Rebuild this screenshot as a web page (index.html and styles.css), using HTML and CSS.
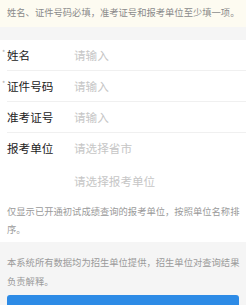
FILE: index.html
```html
<!DOCTYPE html>
<html lang="zh">
<head>
<meta charset="utf-8">
<link rel="stylesheet" href="styles.css">
</head>
<body>
<div class="tip">姓名、证件号码必填，准考证号和报考单位至少填一项。</div>
<div class="form">
  <div class="row line"><span class="label req">姓名</span><span class="ph">请输入</span></div>
  <div class="row line"><span class="label req">证件号码</span><span class="ph">请输入</span></div>
  <div class="row line"><span class="label">准考证号</span><span class="ph">请输入</span></div>
  <div class="row"><span class="label">报考单位</span><span class="ph">请选择省市</span></div>
  <div class="row sub"><span class="label"></span><span class="ph">请选择报考单位</span></div>
  <p class="note">仅显示已开通初试成绩查询的报考单位，按照单位名称排序。</p>
</div>
<div class="foot">
  <p class="note">本系统所有数据均为招生单位提供，招生单位对查询结果负责解释。</p>
  <button class="btn">提交</button>
</div>
</body>
</html>
```
FILE: styles.css
```css
html, body {
  margin: 0;
  padding: 0;
  background: #f5f5f5;
  font-family: "Noto Sans CJK SC", "Noto Sans", sans-serif;
}
.tip {
  height: 27px;
  line-height: 25px;
  padding-left: 7px;
  background: #fdfbf1;
  color: #8a8a8a;
  font-size: 9.3px;
  white-space: nowrap;
}
.form {
  margin-top: 13px;
  background: #fff;
  padding-bottom: 4px;
}
.row {
  display: flex;
  align-items: center;
  height: 30px;
  margin-left: 7px;
  font-size: 11.6px;
}
.row.line {
  border-bottom: 1px solid #f0f0f0;
}
.row.sub {
  margin-top: 3px;
}
.label {
  position: relative;
  width: 67px;
  color: #222;
}
.label.req::before {
  content: "*";
  position: absolute;
  left: -5px;
  top: 0;
  font-size: 7px;
  color: #aaa;
}
.ph {
  color: #c6c6c6;
}
.note {
  margin: 0;
  padding: 6px 6px 0 7px;
  font-size: 9.3px;
  line-height: 18px;
  color: #9a9a9a;
}
.foot .note {
  padding-top: 11px;
  line-height: 19px;
}
.btn {
  display: block;
  margin: 4px 7px 0;
  width: calc(100% - 14px);
  height: 36px;
  border: 0;
  border-radius: 3px;
  background: #2d8be6;
  color: #fff;
  font-family: inherit;
  font-size: 13px;
}
```
